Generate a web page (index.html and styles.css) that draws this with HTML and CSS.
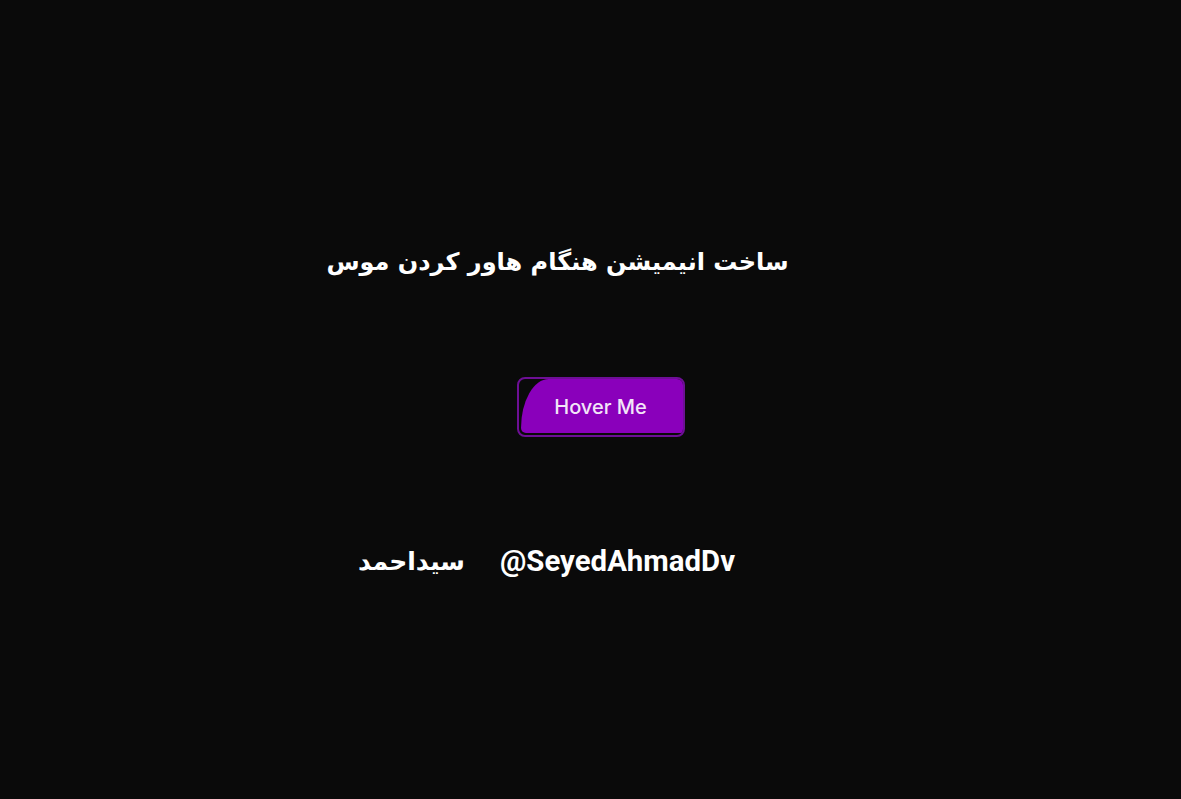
FILE: index.html
```html
<!DOCTYPE html>
<html lang="fa">
<head>
<meta charset="utf-8">
<link rel="stylesheet" href="styles.css">
</head>
<body>
<main class="page">
  <h1 class="title">ساخت انیمیشن هنگام هاور کردن موس</h1>
  <button class="hover-btn"><span class="hover-fill"></span><span class="hover-label">Hover Me</span></button>
  <div class="credit">
    <span class="credit-name">سیداحمد</span>
    <span class="credit-handle">@SeyedAhmadDv</span>
  </div>
</main>
</body>
</html>
```
FILE: styles.css
```css
html, body {
  margin: 0;
  padding: 0;
  background: #0a0a0a;
  height: 100%;
}
.page {
  display: flex;
  flex-direction: column;
  align-items: center;
  padding-top: 240px;
}
.title {
  margin: 0 66px 0 0;
  font-family: "DejaVu Sans", sans-serif;
  font-weight: bold;
  font-size: 24px;
  line-height: 44px;
  color: #ffffff;
  direction: rtl;
}
.hover-btn {
  position: relative;
  margin: 93px 0 0 20px;
  width: 168px;
  height: 60px;
  border: 2px solid #6d0f95;
  border-radius: 8px;
  background: #0a0a0a;
  padding: 0;
  overflow: hidden;
  cursor: pointer;
}
.hover-fill {
  position: absolute;
  left: 2px;
  top: 0;
  right: 0;
  bottom: 2px;
  background: #8a00bb;
  border-top-left-radius: 34px 60px;
  border-bottom-left-radius: 6px;
}
.hover-label {
  position: relative;
  font-family: Inter, sans-serif;
  font-weight: 500;
  font-size: 20px;
  color: #f3e6f8;
}
.credit {
  display: flex;
  align-items: center;
  gap: 35px;
  margin: 107px 88px 0 0;
  color: #ffffff;
  font-weight: bold;
}
.credit-name {
  font-family: "DejaVu Sans", sans-serif;
  font-size: 25px;
  direction: rtl;
}
.credit-handle {
  font-family: Roboto, sans-serif;
  font-size: 29.4px;
}
```
